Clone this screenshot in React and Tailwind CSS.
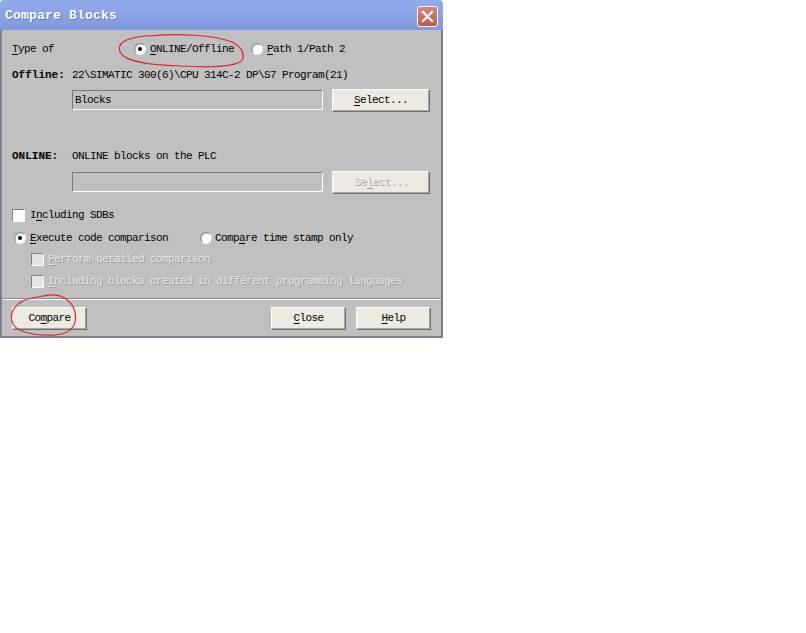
import React from 'react'

const mono = "font-['Liberation_Mono','DejaVu_Sans_Mono',monospace]"

function U({ children }) {
  return <span className="underline underline-offset-2">{children}</span>
}

function Radio({ checked }) {
  return (
    <span className="relative inline-block h-[12px] w-[12px] shrink-0 rounded-full border border-t-[#8a8a8a] border-l-[#8a8a8a] border-r-[#f4f4f4] border-b-[#f4f4f4] bg-white shadow-[inset_1px_1px_0_#c8c8c8]">
      {checked && <span className="absolute left-[3px] top-[3px] h-[4px] w-[4px] rounded-full bg-black" />}
    </span>
  )
}

function Check({ disabled }) {
  return (
    <span
      className={
        'inline-block h-[13px] w-[13px] shrink-0 border border-t-[#808080] border-l-[#808080] border-r-white border-b-white ' +
        (disabled ? 'bg-[#e6e5df]' : 'bg-white')
      }
    />
  )
}

function Button({ children, disabled, className = '' }) {
  return (
    <div
      className={
        'flex h-[23px] w-[75px] items-center justify-center border border-t-white border-l-white border-r-[#6f6f6f] border-b-[#6f6f6f] bg-[#ecebe1] shadow-[inset_-1px_-1px_0_#a8a8a0] ' +
        (disabled ? 'text-[#a9a9a0] ' : 'text-black ') +
        className
      }
    >
      {children}
    </div>
  )
}

function Box({ children }) {
  return (
    <div className="flex h-[20px] w-[251px] items-center border border-t-[#7a7a7a] border-l-[#7a7a7a] border-r-white border-b-white bg-[#c0c0c0] pl-[2px]">
      {children}
    </div>
  )
}

const dis = 'text-[#e9e9e9] [text-shadow:1px_1px_0_#9a9a9a]'

export default function App() {
  return (
    <div className={`relative min-h-[633px] w-[806px] bg-white ${mono} text-[11px] tracking-[-0.6px] text-black`}>
      <div className="flex w-[443px] flex-col">
        {/* title bar */}
        <div className="flex h-[30px] items-center justify-between rounded-t-[4px] bg-gradient-to-b from-[#93acec] via-[#8aa3e6] to-[#7f98df] pl-[5px] pr-[5px]">
          <span className="mt-[2px] text-[13px] font-bold tracking-[0.2px] text-white [text-shadow:1px_1px_0_#5d74b8]">
            Compare Blocks
          </span>
          <span className="mt-[2px] flex h-[21px] w-[21px] items-center justify-center rounded-[3px] border border-white bg-gradient-to-b from-[#d6877b] to-[#c0594b]">
            <svg width="13" height="13" viewBox="0 0 13 13">
              <path d="M2 2 L11 11 M11 2 L2 11" stroke="white" strokeWidth="2.2" strokeLinecap="square" />
            </svg>
          </span>
        </div>

        {/* body */}
        <div className="flex flex-col border-b-2 border-l-2 border-r-2 border-[#7d7f8c] bg-[#c0c0c0] pb-[6px] pl-[10px] pr-[10px] pt-[9px]">
          <div className="flex h-[20px] items-center">
            <span className="w-[122px]">
              <U>T</U>ype of
            </span>
            <Radio checked />
            <span className="ml-[4px] w-[101px]">
              <U>O</U>NLINE/Offline
            </span>
            <Radio />
            <span className="ml-[4px]">
              <U>P</U>ath 1/Path 2
            </span>
          </div>

          <div className="mt-[8px] flex h-[16px] items-center">
            <span className="w-[60px] font-bold tracking-[0px]">Offline:</span>
            <span>22\SIMATIC 300(6)\CPU 314C-2 DP\S7 Program(21)</span>
          </div>

          <div className="mt-[6px] flex h-[22px] items-center pl-[60px]">
            <Box>Blocks</Box>
            <Button className="ml-[9px] h-[22px] w-[98px]">
              <U>S</U>elect...
            </Button>
          </div>

          <div className="mt-[37px] flex h-[16px] items-center">
            <span className="w-[60px] font-bold tracking-[0px]">ONLINE:</span>
            <span>ONLINE blocks on the PLC</span>
          </div>

          <div className="mt-[7px] flex h-[22px] items-center pl-[60px]">
            <Box />
            <Button disabled className="ml-[9px] h-[22px] w-[98px]">
              <span className={dis}>
                Se<U>l</U>ect...
              </span>
            </Button>
          </div>

          <div className="mt-[14px] flex h-[16px] items-center">
            <Check />
            <span className="ml-[5px]">
              I<U>n</U>cluding SDBs
            </span>
          </div>

          <div className="mt-[7px] flex h-[16px] items-center pl-[2px]">
            <Radio checked />
            <span className="ml-[4px] w-[170px]">
              <U>E</U>xecute code comparison
            </span>
            <Radio />
            <span className="ml-[3px]">
              Comp<U>a</U>re time stamp only
            </span>
          </div>

          <div className="mt-[5px] flex h-[16px] items-center pl-[19px]">
            <Check disabled />
            <span className={`ml-[4px] ${dis}`}>
              <U>P</U>erform detailed comparison
            </span>
          </div>

          <div className="mt-[6px] flex h-[16px] items-center pl-[19px]">
            <Check disabled />
            <span className={`ml-[4px] ${dis}`}>
              <U>I</U>ncluding blocks created in different programming languages
            </span>
          </div>

          <div className="-mx-[10px] mt-[9px] h-[2px] border-t border-b border-t-[#8a8a8a] border-b-white" />

          <div className="mt-[7px] flex items-center">
            <Button>
              Co<U>m</U>pare
            </Button>
            <Button className="ml-auto">
              <U>C</U>lose
            </Button>
            <Button className="ml-[10px]">
              <U>H</U>elp
            </Button>
          </div>
        </div>
      </div>

      {/* red hand-drawn annotations */}
      <svg className="pointer-events-none absolute left-0 top-0" width="806" height="633">
        <path
          d="M150 36 C175 33 215 35 232 42 C240 46 244 52 243 58 C242 66 215 68 180 66 C150 65 125 62 120 52 C117 44 124 38 145 36 L165 35"
          fill="none"
          stroke="#e0242c"
          strokeWidth="1.2"
        />
        <path
          d="M45 296 C60 292 72 300 75 312 C78 326 70 334 55 335 C38 336 18 333 13 324 C9 315 13 305 25 300 C33 297 40 297 48 295"
          fill="none"
          stroke="#e0242c"
          strokeWidth="1.2"
        />
      </svg>
    </div>
  )
}
